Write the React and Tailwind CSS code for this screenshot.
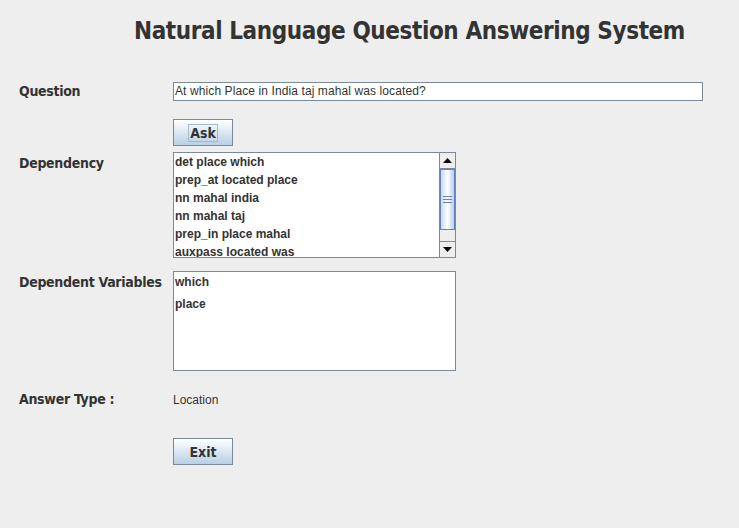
import React from "react";

const labelCls = "w-[154px] shrink-0 text-[14px] font-bold text-[#333333] whitespace-nowrap tracking-[-0.3px]";
const swingFont = { fontFamily: '"Liberation Sans", Arial, sans-serif' };

function MetalButton({ children, focused }) {
  return (
    <button
      type="button"
      className="w-[60px] h-[27px] border border-[#7a8a99] bg-gradient-to-b from-[#ffffff] to-[#b8cfe5] text-[14px] font-bold text-[#333333] flex items-center justify-center"
    >
      <span className={focused ? "border border-[#a3b8cc] px-[1px] leading-[16px]" : "leading-[16px]"}>
        {children}
      </span>
    </button>
  );
}

function ScrollBar() {
  return (
    <div className="w-[16px] h-full flex flex-col border-l border-[#7a8a99] bg-[#eeeeee]">
      <div className="h-[16px] border-b border-[#7a8a99] bg-[#eeeeee] flex items-center justify-center">
        <svg width="9" height="5" viewBox="0 0 9 5"><path d="M4.5 0 L9 5 L0 5 Z" fill="#000" /></svg>
      </div>
      <div className="h-[61px] border border-[#6382bf] bg-gradient-to-r from-[#c8daf0] via-[#ffffff] to-[#b8cfe5] flex flex-col items-center justify-center gap-[2px]">
        <div className="w-[9px] h-px bg-[#6382bf]" />
        <div className="w-[9px] h-px bg-[#6382bf]" />
        <div className="w-[9px] h-px bg-[#6382bf]" />
      </div>
      <div className="flex-1" />
      <div className="h-[16px] border-t border-[#7a8a99] bg-[#eeeeee] flex items-center justify-center">
        <svg width="9" height="5" viewBox="0 0 9 5"><path d="M0 0 L9 0 L4.5 5 Z" fill="#000" /></svg>
      </div>
    </div>
  );
}

export default function App() {
  const deps = [
    "det place which",
    "prep_at located place",
    "nn mahal india",
    "nn mahal taj",
    "prep_in place mahal",
    "auxpass located was",
  ];

  return (
    <div
      className="w-[739px] h-[528px] bg-[#eeeeee] overflow-hidden"
      style={{ fontFamily: '"DejaVu Sans Condensed", "DejaVu Sans", "Liberation Sans", sans-serif', fontStretch: "condensed" }}
    >
      <h1 className="pl-[134px] pt-[16px] h-[48px] text-[24px] font-bold text-[#333333] leading-[30px] whitespace-nowrap tracking-[-0.4px]">
        Natural Language Question Answering System
      </h1>

      <div className="pl-[19px] flex flex-col">
        <div className="mt-[33px] flex items-center">
          <div className={labelCls}>Question</div>
          <div
            className="w-[530px] h-[19px] border border-[#7a8a99] bg-white text-[12px] text-[#333333] leading-[17px] pl-[1px] tracking-[0.1px]"
            style={swingFont}
          >
            At which Place in India taj mahal was located?
          </div>
        </div>

        <div className="mt-[17px] pl-[154px]">
          <MetalButton focused>Ask</MetalButton>
        </div>

        <div className="mt-[6px] flex items-start">
          <div className={`${labelCls} pt-[1px]`}>Dependency</div>
          <div className="w-[283px] h-[106px] border border-[#7a8a99] bg-white flex">
            <div
              className="flex-1 overflow-hidden pl-[1px] pt-[1px] text-[12px] font-bold text-[#333333]"
              style={swingFont}
            >
              {deps.map((d) => (
                <div key={d} className="h-[18px] leading-[16px]">{d}</div>
              ))}
            </div>
            <ScrollBar />
          </div>
        </div>

        <div className="mt-[13px] flex items-start">
          <div className={`${labelCls} pt-[1px]`}>Dependent Variables</div>
          <div
            className="w-[283px] h-[100px] border border-[#7a8a99] bg-white pl-[1px] pt-[2px] text-[12px] font-bold text-[#333333]"
            style={swingFont}
          >
            <div className="h-[22px] leading-[16px]">which</div>
            <div className="leading-[16px]">place</div>
          </div>
        </div>

        <div className="mt-[18px] flex items-center">
          <div className={labelCls}>Answer Type :</div>
          <div className="text-[12px] font-medium text-[#333333] leading-[16px]" style={swingFont}>Location</div>
        </div>

        <div className="mt-[28px] pl-[154px]">
          <MetalButton>Exit</MetalButton>
        </div>
      </div>
    </div>
  );
}
